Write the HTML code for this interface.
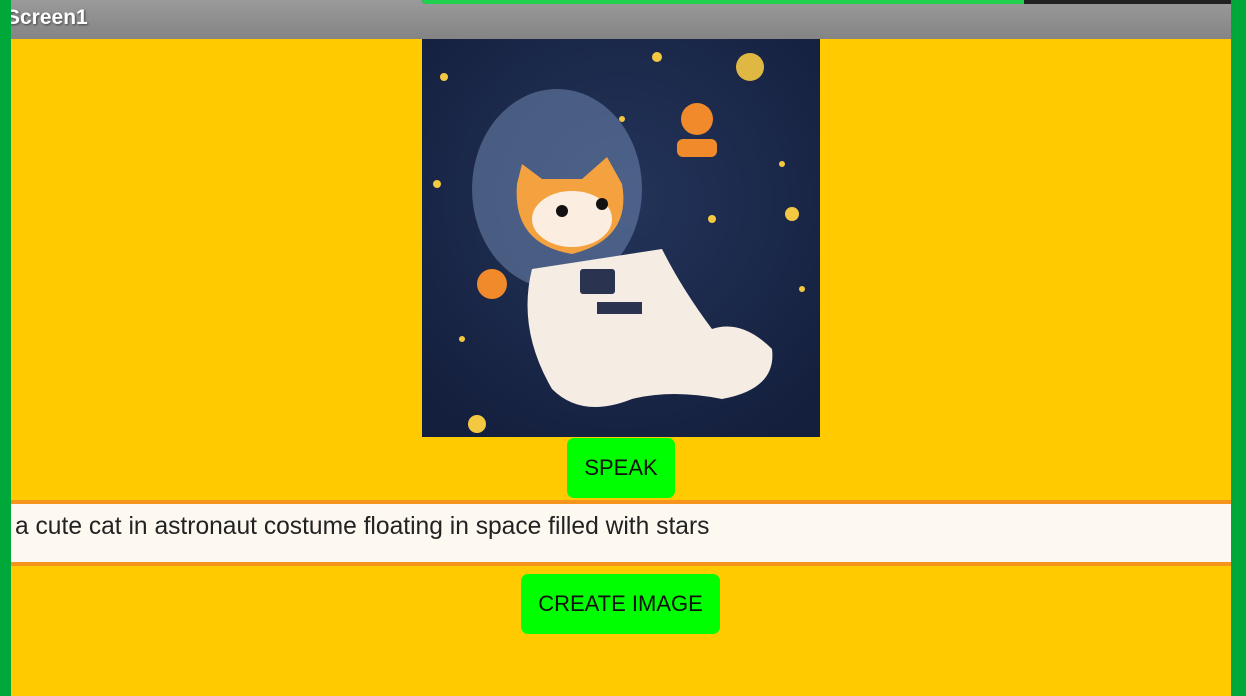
<!DOCTYPE html>
<html><head><style>
body{margin:0;width:1246px;height:696px;overflow:hidden;background:#ffcb00;position:relative;font-family:"Liberation Sans",sans-serif}
.abs{position:absolute}
.btn{position:absolute;background:#00ff00;border-radius:7px;color:#111;font-size:22px;display:flex;align-items:center;justify-content:center}
</style></head><body>
<div class="abs" style="left:0;top:0;width:1246px;height:39px;background:linear-gradient(#9a9a9a,#848484)"></div>
<div class="abs" style="left:6px;top:6px;color:#fff;font-weight:bold;font-size:21px;text-shadow:1px 1px 2px #444">Screen1</div>
<div class="abs" style="left:422px;top:0;width:818px;height:4px;background:#222;border-radius:0 0 6px 6px"></div>
<div class="abs" style="left:422px;top:0;width:602px;height:4px;background:#22d050;border-radius:0 0 0 6px"></div>
<div class="abs" style="left:0;top:0;width:11px;height:696px;background:#00a83a"></div>
<div class="abs" style="left:1231px;top:0;width:15px;height:696px;background:#00a83a"></div>
<svg class="abs" style="left:422px;top:39px" width="398" height="398" viewBox="0 0 398 398">
<defs><radialGradient id="g" cx="0.5" cy="0.4" r="0.7"><stop offset="0" stop-color="#23345a"/><stop offset="1" stop-color="#141f3d"/></radialGradient></defs>
<rect width="398" height="398" fill="url(#g)"/>
<g fill="#f5c842"><circle cx="22" cy="38" r="4"/><circle cx="235" cy="18" r="5"/><circle cx="328" cy="28" r="14" opacity=".9"/><circle cx="15" cy="145" r="4"/><circle cx="370" cy="175" r="7"/><circle cx="290" cy="180" r="4"/><circle cx="40" cy="300" r="3"/><circle cx="55" cy="385" r="9"/><circle cx="380" cy="250" r="3"/><circle cx="200" cy="80" r="3"/><circle cx="360" cy="125" r="3"/></g>
<ellipse cx="135" cy="150" rx="85" ry="100" fill="#6f86b0" opacity=".55"/>
<path d="M110 230 Q95 290 130 350 Q160 380 210 360 Q250 350 300 360 Q355 350 350 310 Q320 280 290 290 Q260 250 240 210 Z" fill="#f5ece4"/>
<circle cx="275" cy="80" r="16" fill="#f08a2a"/><rect x="255" y="100" width="40" height="18" rx="6" fill="#f08a2a"/>
<circle cx="70" cy="245" r="15" fill="#f08a2a"/>
<path d="M95 145 L100 125 L120 140 L160 140 L185 118 L200 145 Q210 200 150 215 Q90 205 95 145 Z" fill="#f4a23f"/>
<ellipse cx="150" cy="180" rx="40" ry="28" fill="#fbeee0"/>
<circle cx="140" cy="172" r="6" fill="#111"/><circle cx="180" cy="165" r="6" fill="#111"/>
<rect x="158" y="230" width="35" height="25" rx="3" fill="#2a3350"/><rect x="175" y="263" width="45" height="12" fill="#2a3350"/>
</svg>
<div class="btn" style="left:567px;top:438px;width:108px;height:60px">SPEAK</div>
<div class="abs" style="left:11px;top:500px;width:1220px;height:58px;background:#fdf9f1;border-top:4px solid #f7941d;border-bottom:4px solid #f7941d"></div>
<div class="abs" style="left:15px;top:513px;font-size:24.6px;color:#222">a cute cat in astronaut costume floating in space filled with stars</div>
<div class="btn" style="left:521px;top:574px;width:199px;height:60px">CREATE IMAGE</div>
</body></html>
